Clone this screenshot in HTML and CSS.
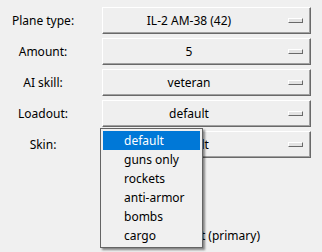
FILE: index.html
```html
<!DOCTYPE html>
<html lang="en">
<head>
    <meta charset="UTF-8">
    <meta name="viewport" content="width=device-width, initial-scale=1.0">
    <title>Plane settings</title>
    <link rel="stylesheet" href="styles.css">
</head>
<body>
    <div class="panel">
        <div class="form-grid">
            <span class="field-label">Plane type:</span>
            <div class="combo"><span class="combo-value">IL-2 AM-38 (42)</span><span class="combo-arrow"></span></div>

            <span class="field-label">Amount:</span>
            <div class="combo"><span class="combo-value">5</span><span class="combo-arrow"></span></div>

            <span class="field-label">AI skill:</span>
            <div class="combo"><span class="combo-value">veteran</span><span class="combo-arrow"></span></div>

            <span class="field-label">Loadout:</span>
            <div class="combo"><span class="combo-value">default</span><span class="combo-arrow"></span></div>

            <span class="field-label">Skin:</span>
            <div class="combo"><span class="combo-value">default</span><span class="combo-arrow"></span></div>
        </div>

        <div class="primary-row">Lead element (primary)</div>

        <ul class="dropdown-list">
            <li class="selected">default</li>
            <li>guns only</li>
            <li>rockets</li>
            <li>anti-armor</li>
            <li>bombs</li>
            <li>cargo</li>
        </ul>
    </div>
</body>
</html>
```

FILE: styles.css
```css
body {
    margin: 0;
    background-color: #f0f0f0;
    font-family: "Noto Sans", "Liberation Sans", sans-serif;
    font-size: 12px;
    color: #000000;
}

.panel {
    position: relative;
    width: 322px;
    height: 252px;
    overflow: hidden;
}

.form-grid {
    display: grid;
    grid-template-columns: 86px 1fr;
    grid-auto-rows: 27px;
    column-gap: 16px;
    row-gap: 4px;
    padding: 7px 11px 0 0;
}

.field-label {
    display: flex;
    align-items: center;
    justify-content: center;
}

.combo {
    display: flex;
    align-items: center;
    background-color: #efefef;
    border: 1px solid;
    border-color: #ffffff #696969 #696969 #ffffff;
    box-shadow: inset -1px -1px 0 #a0a0a0;
}

.combo-value {
    flex: 1;
    text-align: center;
}

.combo-arrow {
    width: 13px;
    height: 3px;
    margin: 0 7px 0 13px;
    background-color: #e3e3e3;
    border: 1px solid;
    border-color: #ffffff #696969 #696969 #ffffff;
}

.primary-row {
    margin-top: 69px;
    text-align: right;
    padding-right: 62px;
}

.dropdown-list {
    position: absolute;
    left: 100px;
    top: 128px;
    width: 97px;
    margin: 0;
    padding: 2px;
    list-style: none;
    background-color: #f0f0f0;
    border: 1px solid #646464;
    box-shadow: 2px 2px 2px rgba(0, 0, 0, 0.45);
}

.dropdown-list li {
    height: 19px;
    line-height: 19px;
    padding-left: 21px;
}

.dropdown-list .selected {
    background-color: #0078d7;
    color: #ffffff;
}
```
